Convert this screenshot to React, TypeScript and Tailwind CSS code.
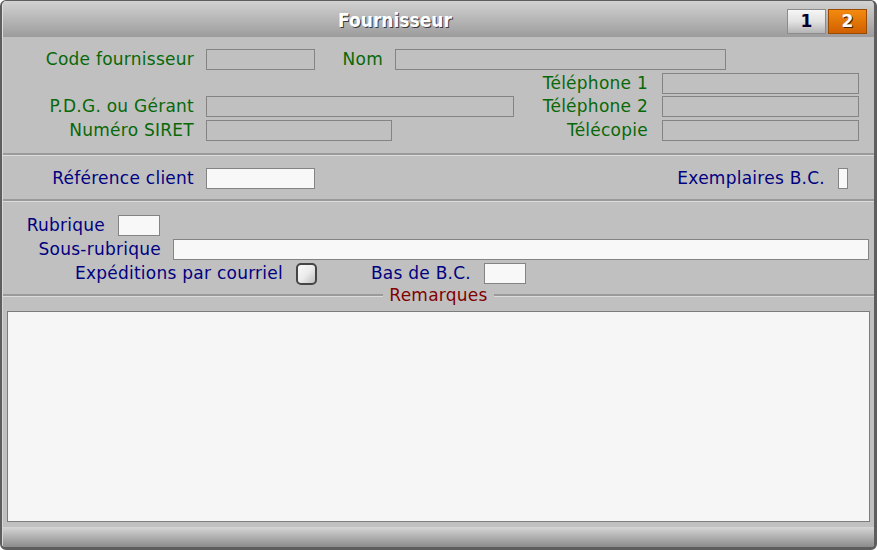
import React from "react";

const grayInput = "h-[21px] border border-[#848484] bg-[#c0c0c0]";
const whiteInput = "h-[21px] border border-[#848484] bg-[#f8f8f8]";
const green = "text-[#086808]";
const blue = "text-[#000080]";

function Sep() {
  return <div className="h-[3px] border-t-2 border-b border-t-[#9a9a9a] border-b-[#dcdcdc]" />;
}

export default function App() {
  return (
    <div
      className="w-[877px] h-[550px] flex flex-col overflow-hidden rounded-[6px] border-t border-l-2 border-r-[3px] border-b-[3px] border-[#5e5e5e] bg-[#c0c0c0] text-[17px] leading-none tracking-[0.25px]"
      style={{ fontFamily: '"DejaVu Sans", Verdana, sans-serif' }}
    >
      {/* Title bar */}
      <div className="h-[36px] flex bg-gradient-to-b from-[#d2d2d2] to-[#9c9c9c] border-l border-[#e0e0e0]">
        <div
          className="flex-1 flex items-center justify-center pt-[2px] text-white font-bold text-[19px] tracking-normal [font-stretch:condensed] [text-shadow:1px_1px_0_#3a3a3a]"
          style={{ fontFamily: '"DejaVu Sans Condensed", "DejaVu Sans", sans-serif' }}
        >
          Fournisseur
        </div>
        <div className="self-end mb-[3px] mr-[7px] flex gap-[2px]">
          <div className="w-[39px] h-[25px] flex items-center justify-center border border-[#8c8c8c] bg-gradient-to-b from-[#f6f6f6] via-[#e2e2e2] to-[#b4b4b4] text-[#000030] font-bold text-[17px]">
            1
          </div>
          <div className="w-[39px] h-[25px] flex items-center justify-center border border-[#9a4a00] bg-gradient-to-b from-[#f48a10] to-[#d06000] text-white font-bold text-[17px] [text-shadow:1px_1px_0_#4a2000]">
            2
          </div>
        </div>
      </div>

      {/* Body */}
      <div className="flex-1 flex flex-col pt-[12px] border-l border-[#d8d8d8]">
        {/* Row 1 */}
        <div className="flex items-center h-[21px]">
          <div className={`w-[191px] text-right ${green}`}>Code fournisseur</div>
          <div className={`ml-[12px] w-[109px] ${grayInput}`} />
          <div className={`w-[68px] text-right ${green}`}>Nom</div>
          <div className={`ml-[12px] w-[331px] ${grayInput}`} />
        </div>
        {/* Row 2 */}
        <div className="flex items-center h-[21px] mt-[3px]">
          <div className="w-[517px]" />
          <div className={`w-[128px] text-right ${green}`}>Téléphone 1</div>
          <div className={`ml-[14px] w-[197px] ${grayInput}`} />
        </div>
        {/* Row 3 */}
        <div className="flex items-center h-[21px] mt-[2px]">
          <div className="w-[517px] flex items-center">
            <div className={`w-[191px] text-right ${green}`}>P.D.G. ou Gérant</div>
            <div className={`ml-[12px] w-[308px] ${grayInput}`} />
          </div>
          <div className={`w-[128px] text-right ${green}`}>Téléphone 2</div>
          <div className={`ml-[14px] w-[197px] ${grayInput}`} />
        </div>
        {/* Row 4 */}
        <div className="flex items-center h-[21px] mt-[3px]">
          <div className="w-[517px] flex items-center">
            <div className={`w-[191px] text-right ${green}`}>Numéro SIRET</div>
            <div className={`ml-[12px] w-[186px] ${grayInput}`} />
          </div>
          <div className={`w-[128px] text-right ${green}`}>Télécopie</div>
          <div className={`ml-[14px] w-[197px] ${grayInput}`} />
        </div>

        <div className="mt-[12px]">
          <Sep />
        </div>

        {/* Référence row */}
        <div className="flex items-center h-[21px] mt-[12px]">
          <div className={`w-[191px] text-right ${blue}`}>Référence client</div>
          <div className={`ml-[12px] w-[109px] ${whiteInput}`} />
          <div className={`ml-auto ${blue}`}>Exemplaires B.C.</div>
          <div className={`ml-[13px] w-[10px] mr-[26px] ${whiteInput}`} />
        </div>

        <div className="mt-[10px]">
          <Sep />
        </div>

        {/* Rubrique */}
        <div className="flex items-center h-[21px] mt-[13px]">
          <div className={`w-[102px] text-right ${blue}`}>Rubrique</div>
          <div className={`ml-[13px] w-[42px] ${whiteInput}`} />
        </div>
        <div className="flex items-center h-[21px] mt-[3px]">
          <div className={`w-[158px] text-right ${blue}`}>Sous-rubrique</div>
          <div className={`ml-[12px] w-[696px] ${whiteInput}`} />
        </div>
        <div className="flex items-center h-[21px] mt-[3px]">
          <div className={`w-[280px] text-right ${blue}`}>Expéditions par courriel</div>
          <div className="ml-[13px] w-[21px] h-[22px] rounded-[5px] border-2 border-[#454545] bg-gradient-to-br from-[#fbfbfb] via-[#ececec] to-[#c0c0c0]" />
          <div className={`w-[154px] text-right ${blue}`}>Bas de B.C.</div>
          <div className={`ml-[13px] w-[42px] ${whiteInput}`} />
        </div>

        {/* Remarques separator */}
        <div className="flex items-center h-[20px] mt-[1px]">
          <div className="flex-1">
            <Sep />
          </div>
          <div className="px-[6px] text-[#800000]">Remarques</div>
          <div className="flex-1">
            <Sep />
          </div>
        </div>

        {/* Textarea */}
        <div className="mt-[6px] ml-[4px] w-[863px] h-[211px] border border-[#7c7c7c] bg-[#f6f6f6]" />
      </div>

      {/* Bottom bar */}
      <div className="h-[20px] bg-gradient-to-b from-[#d6d6d6] to-[#8c8c8c] border-l border-[#d8d8d8]" />
    </div>
  );
}
